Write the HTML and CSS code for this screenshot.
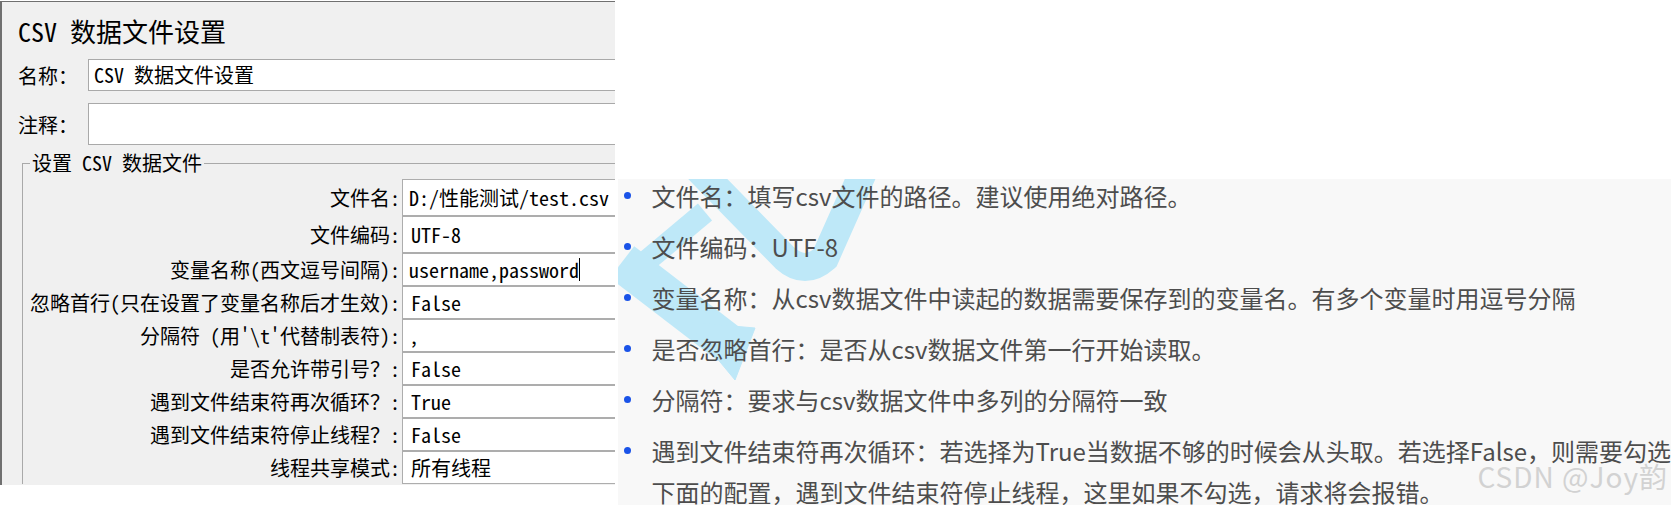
FILE: index.html
```html
<!DOCTYPE html>
<html lang="zh-CN">
  <head>
    <meta charset="UTF-8" />
    <meta name="viewport" content="width=device-width, initial-scale=1.0" />
    <title>CSV 数据文件设置</title>
    <link rel="stylesheet" href="styles.css">
  </head>
  <body>
    <div class="page">
      <div class="config">
        <h1 class="config-title">CSV 数据文件设置</h1>
        <div class="line">
          <label class="line-label">名称：</label>
          <div class="box">CSV 数据文件设置</div>
        </div>
        <div class="line">
          <label class="line-label">注释：</label>
          <div class="box box-comment"></div>
        </div>

        <fieldset class="group">
          <legend>设置 CSV 数据文件</legend>
          <div class="grid">
            <div class="key">文件名:</div>
            <div class="val">D:/性能测试/test.csv</div>
            <div class="key">文件编码:</div>
            <div class="val combo">UTF-8</div>
            <div class="key">变量名称(西文逗号间隔):</div>
            <div class="val">username,password<span class="caret"></span></div>
            <div class="key">忽略首行(只在设置了变量名称后才生效):</div>
            <div class="val combo">False</div>
            <div class="key">分隔符 (用'\t'代替制表符):</div>
            <div class="val">,</div>
            <div class="key">是否允许带引号？:</div>
            <div class="val combo">False</div>
            <div class="key">遇到文件结束符再次循环？:</div>
            <div class="val combo">True</div>
            <div class="key">遇到文件结束符停止线程？:</div>
            <div class="val combo">False</div>
            <div class="key">线程共享模式:</div>
            <div class="val combo">所有线程</div>
          </div>
        </fieldset>
      </div>

      <div class="notes">
        <!-- watermark stroke from the original picture -->
        <svg class="mark" viewBox="621 179 300 220">
          <path d="M700 168 L788 258 Q808 276 828 258 L868 168" />
          <path d="M634 274 L708 212" class="thin" />
          <path d="M625 262 L733 345" class="wide" />
          <polygon points="690,322 758,328 738,380" />
        </svg>
        <ul>
          <li>文件名：填写csv文件的路径。建议使用绝对路径。</li>
          <li>文件编码：UTF-8</li>
          <li>变量名称：从csv数据文件中读起的数据需要保存到的变量名。有多个变量时用逗号分隔</li>
          <li>是否忽略首行：是否从csv数据文件第一行开始读取。</li>
          <li>分隔符：要求与csv数据文件中多列的分隔符一致</li>
          <li>遇到文件结束符再次循环：若选择为True当数据不够的时候会从头取。若选择False，则需要勾选<br>下面的配置，遇到文件结束符停止线程，这里如果不勾选，请求将会报错。</li>
        </ul>
        <div class="sign">CSDN @Joy韵</div>
      </div>
    </div>
  </body>
</html>
```

FILE: styles.css
```css
* {
  box-sizing: border-box;
}

body {
  margin: 0;
  width: 1671px;
  height: 505px;
  overflow: hidden;
  background: #fff;
}

.page {
  display: flex;
  align-items: flex-start;
  gap: 3px;
  height: 505px;
}

/* left: jmeter config panel */
.config {
  width: 618px;
  height: 484px;
  margin-top: 1px;
  padding-left: 16px;
  overflow: hidden;
  background: #f0f0f0;
  border-left: 2px solid #707070;
  border-top: 1px solid #707070;
  color: #000;
  font-family: "Noto Sans Mono CJK SC", "Noto Sans CJK SC", monospace;
}

.config-title {
  margin: 0;
  padding-top: 14px;
  font-size: 26px;
  font-weight: normal;
  line-height: 30px;
}

.line {
  display: flex;
  align-items: center;
  margin-top: 13px;
}

.line + .line {
  margin-top: 12px;
}

.line-label {
  width: 70px;
  font-size: 20px;
}

.box {
  flex: 1;
  height: 32px;
  padding-left: 5px;
  background: #fff;
  border: 1px solid #a9a9a9;
  border-right: none;
  font-size: 20px;
  line-height: 30px;
  white-space: nowrap;
}

.box-comment {
  height: 42px;
}

.group {
  min-width: 0;
  margin: 8px 0 0 4px;
  padding: 6px 0 0 0;
  border: 1px solid #a9a9a9;
  border-right: none;
  border-bottom: none;
}

.group legend {
  margin-left: 7px;
  padding: 0 2px;
  font-size: 20px;
  line-height: 20px;
}

.grid {
  display: grid;
  grid-template-columns: 377px 1fr;
  grid-template-rows: 37px 37px repeat(7, 33px);
  column-gap: 2px;
  font-size: 20px;
}

.key {
  align-self: center;
  text-align: right;
  white-space: nowrap;
}

.val {
  display: flex;
  align-items: center;
  padding-left: 6px;
  background: #fff;
  border: 1px solid #adadad;
  border-right: none;
  white-space: nowrap;
}

.val.combo {
  padding-left: 8px;
}

.caret {
  display: inline-block;
  width: 1px;
  height: 23px;
  background: #000;
}

/* right: notes */
.notes {
  position: relative;
  flex: 1;
  height: 326px;
  margin-top: 179px;
  background: #f8f8f8;
  color: #4d4d4d;
  font-family: "Noto Sans CJK SC", sans-serif;
  font-size: 24px;
}

.mark {
  position: absolute;
  left: 0;
  top: 0;
  width: 300px;
  height: 220px;
  fill: #bee8f8;
  stroke: #bee8f8;
}

.mark path {
  fill: none;
  stroke-width: 28;
}

.mark path.thin {
  stroke-width: 22;
}

.mark path.wide {
  stroke-width: 40;
}

.notes ul {
  position: relative;
  margin: -4px 0 0;
  padding: 0;
  list-style: none;
}

.notes li {
  display: grid;
  grid-template-columns: 34px 1fr;
  margin-bottom: 10px;
  line-height: 41px;
  white-space: nowrap;
}

.notes li::before {
  content: "";
  width: 7px;
  height: 7px;
  margin: 17px 0 0 6px;
  border-radius: 50%;
  background: #1a53e8;
}

.sign {
  position: absolute;
  right: 3px;
  top: 283px;
  color: #d2d2d2;
  font-size: 28px;
  line-height: 28px;
  letter-spacing: 1px;
}
```
